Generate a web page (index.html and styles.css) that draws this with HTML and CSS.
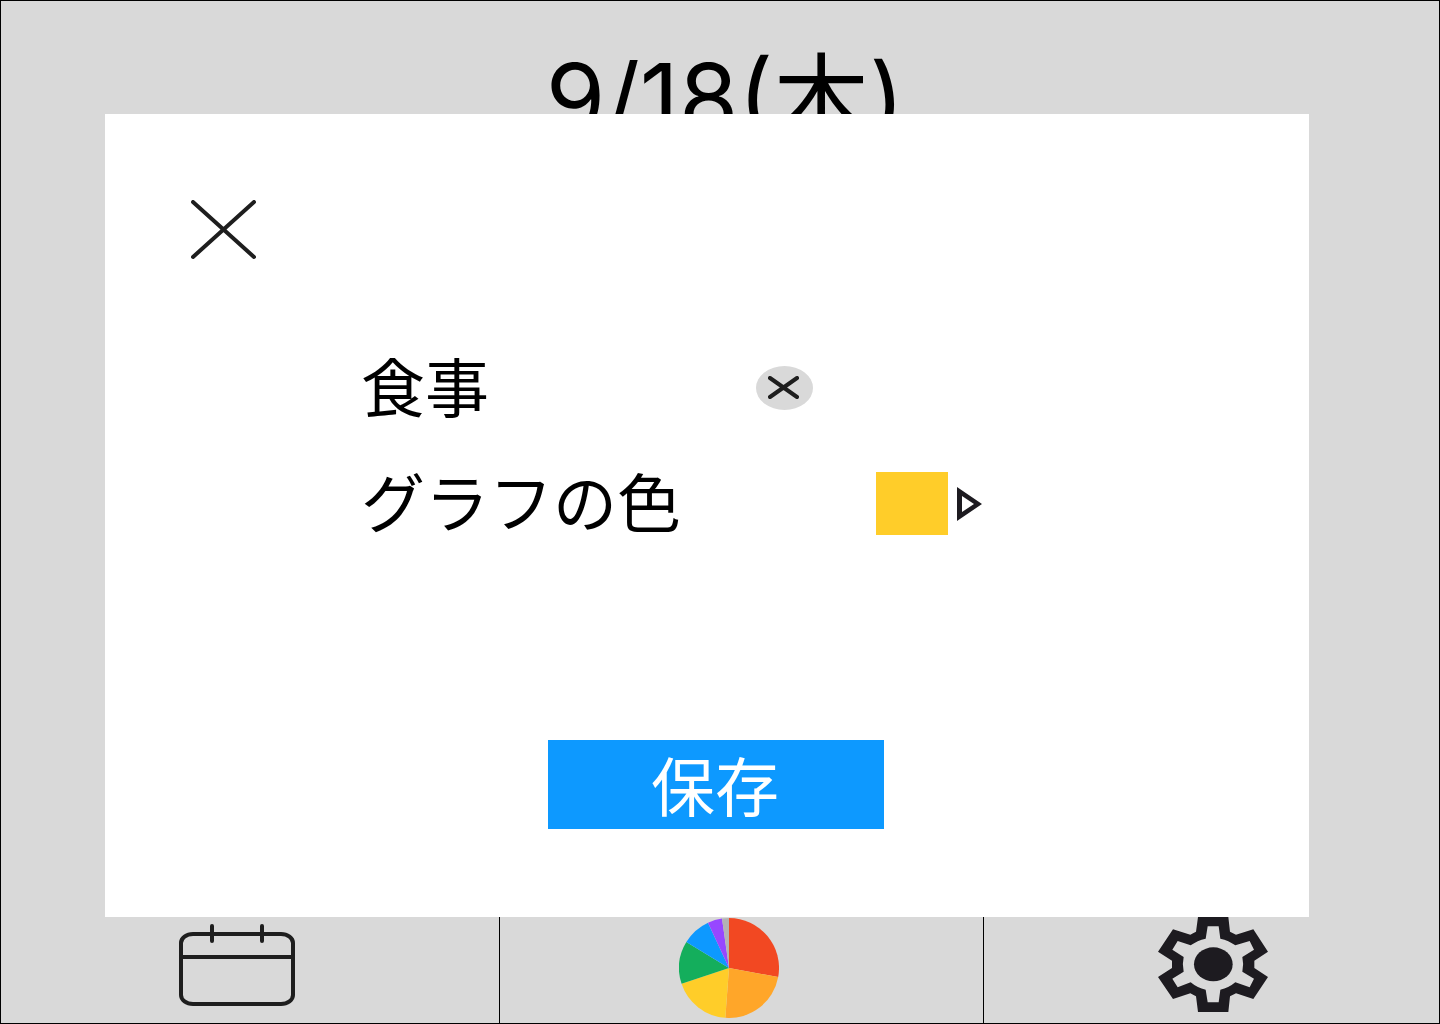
FILE: index.html
```html
<!DOCTYPE html>
<html lang="ja">
<head>
  <meta charset="utf-8">
  <meta name="viewport" content="width=device-width, initial-scale=1">
  <title>食事</title>
  <link rel="stylesheet" href="styles.css">
</head>
<body>
  <div class="app">
    <header class="header">
      <h1 class="date">9/18(木)</h1>
    </header>

    <nav class="tabs">
      <a class="tab tab-calendar" href="#calendar" aria-label="カレンダー">
        <svg width="118" height="84" viewBox="0 0 118 84" fill="none" stroke="#1e1e1e" stroke-width="4" stroke-linecap="round">
          <rect x="3" y="11" width="112" height="70" rx="12" ry="9"/>
          <path d="M3 34H115M34 3V18M84 3V18"/>
        </svg>
      </a>
      <a class="tab tab-chart" href="#chart" aria-label="グラフ">
        <svg width="100" height="100" viewBox="-150 -150 300 300">
          <path fill="#f24822" d="M0 0V-150A150 150 0 0 1 147.600 27Z"/>
          <path fill="#ffa629" d="M0 0L147.600 27A150 150 0 0 1 -11 149.600Z"/>
          <path fill="#ffcd29" d="M0 0L-11 149.600A150 150 0 0 1 -142.300 47.500Z"/>
          <path fill="#14ae5c" d="M0 0L-142.300 47.500A150 150 0 0 1 -128 -78Z"/>
          <path fill="#0d99ff" d="M0 0L-128 -78A150 150 0 0 1 -63 -136Z"/>
          <path fill="#9747ff" d="M0 0L-63 -136A150 150 0 0 1 -21 -148.500Z"/>
          <path fill="#b3b3b3" d="M0 0L-21 -148.500A150 150 0 0 1 0 -150Z"/>
        </svg>
      </a>
      <a class="tab tab-settings" href="#settings" aria-label="設定">
        <svg width="110" height="95" viewBox="54 53 330 285" fill="#1d1b20">
          <path fill-rule="evenodd" d="M174 53H265L270 97Q279 101 288 106L340 90L384 157L343 184V206L384 233L340 299L288 282Q279 287 270 291L265 338H174L168 291Q159 287 151 282L99 299L54 233L96 206V184L54 157L99 90L151 106Q159 101 168 97ZM203 81L197 118Q172 123 152 138L113 125L97 151L131 173Q126 195 131 217L97 238L113 264L152 249Q172 266 197 271L203 309H236L241 271Q266 266 286 249L329 264L342 238L307 217Q312 195 307 173L342 151L329 125L286 138Q266 123 241 118L236 81Z"/>
          <ellipse cx="220" cy="195" rx="58" ry="51"/>
        </svg>
      </a>
    </nav>

    <form class="dialog" role="dialog" aria-label="項目の編集">
      <button class="close" type="button" aria-label="閉じる">
        <svg width="66" height="60" viewBox="0 0 66 60" fill="none" stroke="#1e1e1e" stroke-width="4" stroke-linecap="round">
          <path d="M2 2L63 57M63 2L2 57"/>
        </svg>
      </button>

      <div class="fields">
        <div class="field">
          <input class="name" type="text" value="食事" aria-label="項目名">
          <button class="clear" type="button" aria-label="消去">
            <svg width="31" height="24" viewBox="0 0 31 24" fill="none" stroke="#1e1e1e" stroke-width="4" stroke-linecap="round">
              <path d="M2 2L29 21M29 2L2 21"/>
            </svg>
          </button>
        </div>
        <div class="field">
          <label class="label" for="color">グラフの色</label>
          <button class="color" id="color" type="button">
            <span class="swatch"></span>
            <svg width="25" height="35" viewBox="0 -1 25 35" fill="#1d1b20">
              <path fill-rule="evenodd" d="M0 0L25 17L0 34ZM5 9V25L17 17Z"/>
            </svg>
          </button>
        </div>
      </div>

      <button class="save" type="submit">保存</button>
    </form>
  </div>
</body>
</html>
```
FILE: styles.css
```css
* {
  box-sizing: border-box;
}

body {
  margin: 0;
  font-family: Inter, "Noto Sans CJK JP", sans-serif;
  color: #000;
}

button {
  padding: 0;
  border: 0;
  background: none;
  font: inherit;
  color: inherit;
  cursor: pointer;
}

svg {
  display: block;
}

.app {
  position: relative;
  display: flex;
  flex-direction: column;
  justify-content: space-between;
  min-height: 100vh;
  border: 1px solid #000;
  background: #d9d9d9;
}

.header {
  padding: 39px 0 0 10px;
  text-align: center;
}

.date {
  margin: 0;
  font-size: 96px;
  font-weight: 400;
  line-height: 116px;
}

.tabs {
  display: grid;
  grid-template-columns: 499fr 484fr 455fr;
  height: 108px;
}

.tab {
  display: flex;
  justify-content: center;
  align-items: flex-start;
  border-right: 1px solid #000;
}

.tab:last-child {
  border-right: 0;
}

.tab-calendar {
  padding: 8px 26px 0 0;
}

.tab-chart {
  padding: 3px 26px 0 0;
}

.tab-settings {
  padding: 2px 0 0 2px;
}

/* Edit dialog, floating over the day view */
.dialog {
  position: absolute;
  inset: 113px 130px 106px 104px;
  display: flex;
  flex-direction: column;
  padding: 86px 68px 88px 86px;
  background: #fff;
}

.close {
  align-self: flex-start;
}

.fields {
  display: grid;
  gap: 37px;
  margin: 89px 0 0 170px;
}

.field {
  display: flex;
  align-items: center;
  height: 78px;
  font-size: 64px;
  line-height: 78px;
}

.name {
  width: 395px;
  height: 78px;
  padding: 2px 0 0;
  border: 0;
  outline: 0;
  background: none;
  font: inherit;
  color: inherit;
}

.clear {
  display: grid;
  place-items: center;
  width: 57px;
  height: 44px;
  padding-right: 3px;
  border-radius: 50%;
  background: #d9d9d9;
}

.label {
  width: 515px;
  padding-top: 2px;
}

.color {
  display: flex;
  align-items: center;
  gap: 9px;
}

.swatch {
  width: 72px;
  height: 63px;
  background: #ffcd29;
}

.save {
  align-self: center;
  width: 336px;
  height: 89px;
  margin-top: auto;
  padding: 6px 2px 0 0;
  background: #0d99ff;
  font-size: 64px;
  line-height: 78px;
  color: #fff;
}
```
